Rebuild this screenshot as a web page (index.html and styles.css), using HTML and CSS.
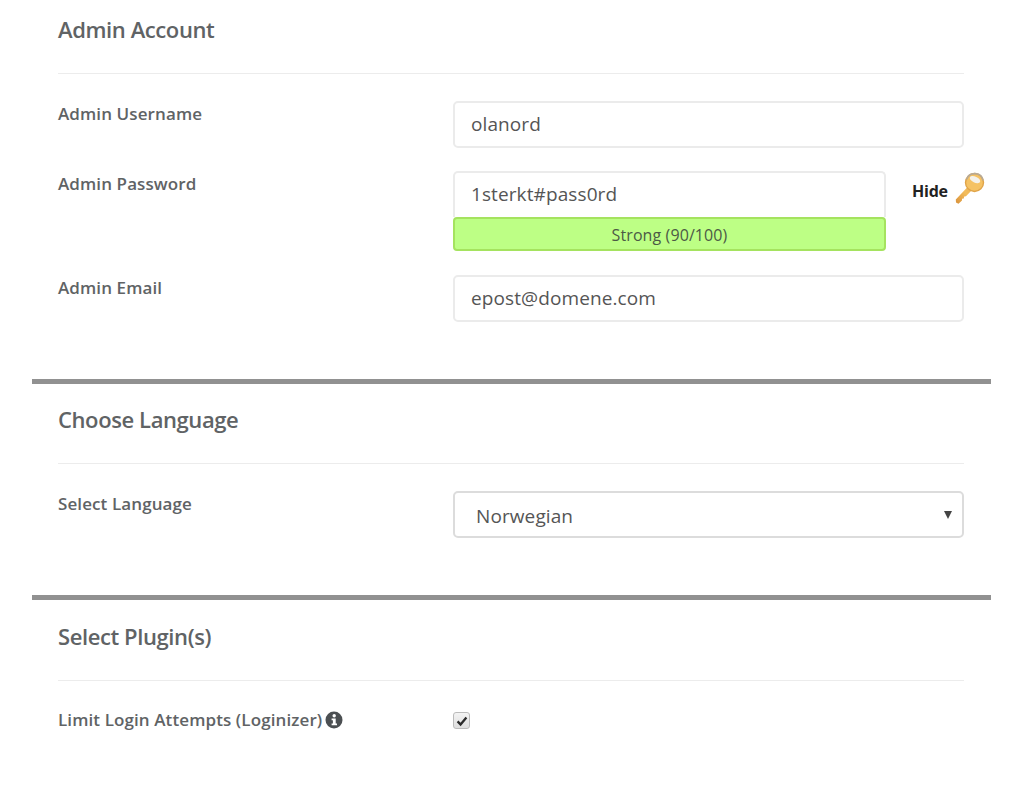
FILE: index.html
```html
<!DOCTYPE html>
<html>
<head>
    <link rel="stylesheet" href="styles.css">
</head>
<body>
  <div class="page">
    <div class="section section-first">
      <h2 class="section-title">Admin Account</h2>
      <div class="row row-username">
        <label class="row-label">Admin Username</label>
        <input class="text-input" type="text" value="olanord">
      </div>
      <div class="row row-password">
        <label class="row-label">Admin Password</label>
        <div class="password-line">
          <div class="password-box">
            <input class="text-input password-input" type="text" value="1sterkt#pass0rd">
            <div class="strength">Strong (90/100)</div>
          </div>
          <div class="hide-toggle">
            <span class="hide-text">Hide</span>
            <svg class="key-icon" width="30" height="34" viewBox="0 0 30 34">
              <defs>
                <linearGradient id="keyGold" x1="0" y1="1" x2="1" y2="0">
                  <stop offset="0" stop-color="#d8913a"/>
                  <stop offset="0.6" stop-color="#f3bd5c"/>
                  <stop offset="1" stop-color="#e8b25a"/>
                </linearGradient>
              </defs>
              <path d="M13.5 14 L0.8 27.5 L1 30.5 L3.5 31.8 L7 28.5 L7 26.8 L8.8 26.5 L9.2 24.6 L11 24.3 L17.5 17.5 Z" fill="url(#keyGold)"/>
              <circle cx="19.5" cy="10.5" r="9" fill="#f5c264" stroke="#e0a449" stroke-width="1.4"/>
              <path d="M11.5 7.5 C13 3 17 1.4 20.5 1.6 C24.5 2 27.5 4.8 28 8.5" fill="none" stroke="#b7aa97" stroke-width="1.6"/>
              <ellipse cx="20" cy="7.6" rx="5.6" ry="3" transform="rotate(25 20 7.6)" fill="#f4f1ea"/>
            </svg>
          </div>
        </div>
      </div>
      <div class="row row-email">
        <label class="row-label">Admin Email</label>
        <input class="text-input" type="text" value="epost@domene.com">
      </div>
    </div>

    <div class="section section-language">
      <h2 class="section-title">Choose Language</h2>
      <div class="row row-select">
        <label class="row-label">Select Language</label>
        <div class="select-wrap">
          <select class="select-input">
            <option>Norwegian</option>
          </select>
          <span class="select-arrow"></span>
        </div>
      </div>
    </div>

    <div class="section section-plugins">
      <h2 class="section-title">Select Plugin(s)</h2>
      <div class="row row-plugin">
        <label class="row-label plugin-label">
          Limit Login Attempts (Loginizer)
          <svg class="info-icon" width="18" height="18" viewBox="0 0 18 18">
            <circle cx="9" cy="9" r="8.5" fill="#4b4f52"/>
            <circle cx="9.2" cy="4.8" r="1.7" fill="#fff"/>
            <path d="M6.6 7.4 H10.7 V12.4 H12 V14.2 H6.6 V12.4 H7.9 V9.2 H6.6 Z" fill="#fff"/>
          </svg>
        </label>
        <div class="checkbox">
          <svg width="12" height="12" viewBox="0 0 12 12">
            <path d="M1.6 6.4 L4.6 9.6 L10.4 2.6" fill="none" stroke="#2b2b2b" stroke-width="2.3"/>
          </svg>
        </div>
      </div>
    </div>
  </div>
</body>
</html>
```

FILE: styles.css
```css
* {
    box-sizing: border-box;
}

body {
    margin: 0;
    background: #fff;
    font-family: "Open Sans", "Liberation Sans", sans-serif;
    color: #555;
}

.page {
    width: 959px;
    margin-left: 32px;
}

.section {
    padding: 0 27px 0 26px;
    border-bottom: 5px solid #919191;
}

.section-plugins {
    border-bottom: none;
}

.section-first {
    height: 384px;
}

.section-language {
    height: 216px;
}

.section-title {
    height: 74px;
    margin: 0;
    border-bottom: 1px solid #ececec;
    font-size: 22px;
    font-weight: 600;
    line-height: 59px;
    letter-spacing: -0.4px;
    color: #606365;
}

.section-language .section-title {
    height: 80px;
    line-height: 71px;
}

.section-plugins .section-title {
    height: 81px;
    line-height: 72px;
}

.row {
    display: grid;
    grid-template-columns: 395px 511px;
}

.row-username {
    margin-top: 27px;
}

.row-password {
    margin-top: 23px;
}

.row-email {
    margin-top: 24px;
}

.row-select {
    margin-top: 27px;
}

.row-plugin {
    margin-top: 31px;
}

.row-label {
    padding-top: 1px;
    font-size: 17px;
    font-weight: 600;
    line-height: 24px;
    letter-spacing: 0.1px;
    color: #606365;
}

.text-input {
    display: block;
    width: 100%;
    height: 47px;
    padding: 0 16px 2px;
    border: 2px solid #ebebeb;
    border-radius: 5px;
    background: #fff;
    font-family: inherit;
    font-size: 19px;
    letter-spacing: 0.1px;
    color: #555;
    outline: none;
}

.password-line {
    display: flex;
    align-items: flex-start;
}

.password-box {
    flex: none;
    width: 433px;
}

.password-input {
    height: 46px;
    border-bottom: none;
    border-radius: 5px 5px 0 0;
}

.strength {
    height: 34px;
    border: 2px solid #a5e35f;
    border-radius: 4px;
    background: #bdff85;
    font-size: 16px;
    line-height: 32px;
    text-align: center;
    letter-spacing: 0.1px;
    color: #4c5a45;
}

.hide-toggle {
    flex: none;
    display: flex;
    align-items: flex-start;
    gap: 7px;
    margin-left: 26px;
    margin-top: 1px;
    font-size: 16px;
    font-weight: 700;
    letter-spacing: -0.25px;
    color: #222;
}

.hide-text {
    margin-top: 8px;
}

.key-icon {
    display: block;
}

.select-wrap {
    position: relative;
}

.select-input {
    display: block;
    width: 100%;
    height: 47px;
    padding: 3px 21px 0;
    border: 2px solid #dcdcdc;
    border-radius: 5px;
    background: #fff;
    font-family: inherit;
    font-size: 19px;
    letter-spacing: 0.1px;
    color: #555;
    appearance: none;
    outline: none;
}

.select-arrow {
    position: absolute;
    top: 20px;
    right: 12px;
    border-left: 4px solid transparent;
    border-right: 4px solid transparent;
    border-top: 8px solid #444;
}

.plugin-label {
    display: flex;
    align-items: center;
    gap: 3px;
    height: 24px;
    padding-top: 0;
    margin-top: -4px;
    white-space: nowrap;
}

.info-icon {
    display: block;
}

.checkbox {
    display: flex;
    align-items: center;
    justify-content: center;
    width: 17px;
    height: 17px;
    border: 1px solid #bbb;
    border-radius: 3px;
    background: linear-gradient(#f4f4f4, #dedede);
}
```
